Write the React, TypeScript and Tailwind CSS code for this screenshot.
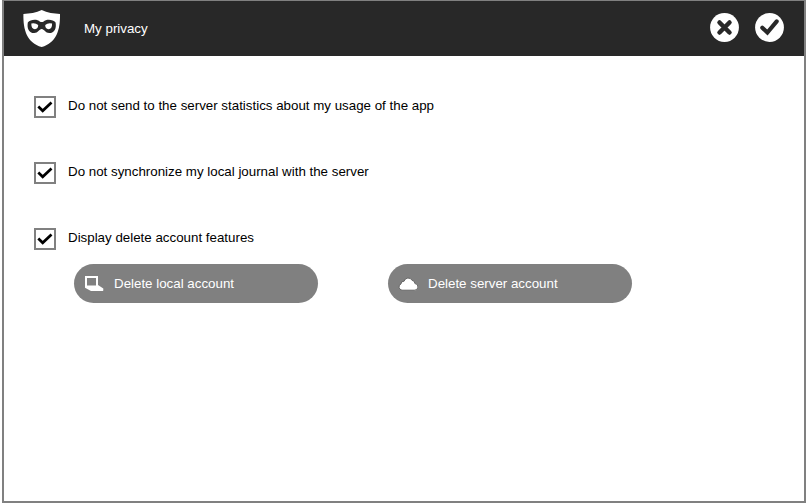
import React from "react";

function ShieldIcon() {
  return (
    <svg width="38" height="38" viewBox="0 0 38 38" className="block">
      <path d="M18.700 0C24.200 2.700 31 3.700 37 3.900C37.300 20 33.500 32.500 18.700 37C3.900 32.500 0.100 20 0.400 3.900C6.500 3.700 13.200 2.700 18.700 0Z" fill="#fff" />
      <path d="M4.800 12.400C7.500 8.900 14.700 9.100 16.700 11.400Q18.700 12.500 20.700 11.400C22.700 9.100 29.900 8.900 32.600 12.400C33.600 18.500 31.500 23 26.200 23C22.400 23 21.200 19 18.700 19C16.200 19 15 23 11.200 23C5.900 23 3.800 18.500 4.800 12.400Z" fill="#282828" />
      <path d="M8.300 13.500Q12.300 12.300 15.200 15.100Q15.200 19.200 11.900 19.200Q8.200 19.200 8.300 13.500ZM29.100 13.500Q25.100 12.300 22.200 15.100Q22.200 19.200 25.500 19.200Q29.200 19.200 29.100 13.500Z" fill="#fff" />
    </svg>
  );
}

function CancelIcon() {
  return (
    <svg width="29" height="29" viewBox="0 0 29 29" className="block">
      <circle cx="14.5" cy="14.5" r="14.4" fill="#fff" />
      <path d="M9.500 9.500L19.500 19.500M19.500 9.500L9.500 19.500" stroke="#282828" strokeWidth="4.500" strokeLinecap="round" />
    </svg>
  );
}

function ValidateIcon() {
  return (
    <svg width="29" height="29" viewBox="0 0 29 29" className="block">
      <circle cx="14.5" cy="14.5" r="14.4" fill="#fff" />
      <path d="M7.300 14.700L12.400 19.600L21.700 8.400" fill="none" stroke="#282828" strokeWidth="4.100" strokeLinecap="round" />
    </svg>
  );
}

function LaptopIcon() {
  return (
    <svg width="20" height="18" viewBox="0 0 20 18" className="block">
      <path fillRule="evenodd" d="M1 1H14V10L19.300 13.400V15.500Q19 16 18 16H7L1 12.700ZM3 3V10.500H12V3Z" fill="#fff" />
    </svg>
  );
}

function CloudIcon() {
  return (
    <svg width="20" height="16" viewBox="0 0 20 16" className="block">
      <path d="M4 14.200A3.300 3.300 0 0 1 3 7.900Q3.200 4.900 6.100 5.200A4.300 4.300 0 0 1 14.100 4.400Q16.900 4.600 16.900 7.500A3.300 3.300 0 0 1 16.300 14.200Z" fill="#fff" stroke="#666" strokeWidth="1" />
    </svg>
  );
}

function Checkbox({ label }: { label: string }) {
  const [checked, setChecked] = React.useState(true);
  return (
    <label className="flex h-[22px] items-start">
      <input type="checkbox" checked={checked} onChange={() => setChecked(!checked)} className="sr-only" />
      <span className="block size-[22px] shrink-0 border-2 border-[#808080] bg-white">
        {checked && (
          <svg width="18" height="18" viewBox="0 0 18 18">
            <path d="M2.300 8.500L6.700 12.800L15.500 4.400" fill="none" stroke="#000" strokeWidth="2.700" />
          </svg>
        )}
      </span>
      <span className="ml-3 leading-[19px]">{label}</span>
    </label>
  );
}

function ActionButton({ icon, children }: { icon: React.ReactNode; children: React.ReactNode }) {
  return (
    <button className="flex h-[39px] w-[244px] items-center rounded-full bg-[#808080] pl-2.5 text-white">
      <span className="mr-2.5 w-5">{icon}</span>
      {children}
    </button>
  );
}

export default function App() {
  return (
    <div className="h-[503px] w-[807px] bg-white pr-px pl-0.5 font-['Liberation_Sans',Arial,sans-serif] text-[13.333px] text-black">
      <div className="h-full border-2 border-t border-[#808080]">
        <header className="flex h-[55px] items-center bg-[#282828] text-white">
          <span className="ml-[19px]"><ShieldIcon /></span>
          <h1 className="ml-[23px] grow">My privacy</h1>
          <button aria-label="Cancel" className="mr-4 mb-0.5"><CancelIcon /></button>
          <button aria-label="Confirm" className="mr-5 mb-0.5"><ValidateIcon /></button>
        </header>
        <main className="pt-10 pl-[30px]">
          <div className="flex flex-col gap-11">
            <Checkbox label="Do not send to the server statistics about my usage of the app" />
            <Checkbox label="Do not synchronize my local journal with the server" />
            <Checkbox label="Display delete account features" />
          </div>
          <div className="mt-3.5 ml-10 flex gap-[70px]">
            <ActionButton icon={<LaptopIcon />}>Delete local account</ActionButton>
            <ActionButton icon={<CloudIcon />}>Delete server account</ActionButton>
          </div>
        </main>
      </div>
    </div>
  );
}
